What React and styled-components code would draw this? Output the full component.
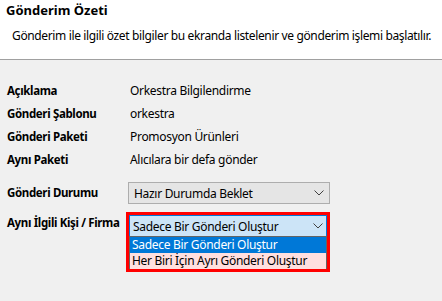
import React from "react";
import styled, { createGlobalStyle } from "styled-components";

const Global = createGlobalStyle`
  html, body { margin: 0; padding: 0; background: #f0f0f0; }
  body { font-family: "Noto Sans", "Open Sans", sans-serif; font-size: 12px; color: #000; }
  * { box-sizing: border-box; }
`;

const Page = styled.div`
  width: 442px;
  height: 301px;
  background: #f0f0f0;
  overflow: hidden;
`;

const Header = styled.header`
  background: #fff;
  height: 60px;
  border-bottom: 1px solid #a0a0a0;
  padding: 1px 0 0 6px;
`;

const Title = styled.h1`
  margin: 0;
  font-size: 13px;
  font-weight: 700;
  line-height: 18px;
  letter-spacing: 0;
`;

const Subtitle = styled.p`
  margin: 9px 0 0 6px;
  font-size: 12px;
  line-height: 16px;
  letter-spacing: -0.36px;
`;

const Form = styled.div`
  display: flex;
  flex-direction: column;
  padding: 19px 0 0 7px;
`;

const Row = styled.div`
  display: flex;
  align-items: ${(p) => (p.$top ? "flex-start" : "center")};
  min-height: ${(p) => p.$h || 23}px;
  margin-top: ${(p) => p.$mt || 0}px;
`;

const Label = styled.div`
  width: 119px;
  flex: none;
  font-weight: 700;
  font-size: 11.5px;
  line-height: 16px;
  letter-spacing: -0.35px;
  white-space: nowrap;
  padding-top: ${(p) => p.$pt || 0}px;
`;

const Value = styled.div`
  padding-left: 4px;
  font-size: 12px;
  line-height: 16px;
  letter-spacing: -0.3px;
`;

const Combo = styled.div`
  margin-left: 2px;
  width: 202px;
  height: 22px;
  display: flex;
  align-items: center;
  justify-content: space-between;
  padding: 0 5px 0 5px;
  background: #e5e5e5;
  border: 1px solid #adadad;
  font-size: 12px;
  letter-spacing: -0.3px;
`;

const Highlight = styled.div`
  width: 204px;
  border: 3px solid #ff0000;
  display: flex;
  flex-direction: column;
`;

const OpenCombo = styled.div`
  height: 21px;
  display: flex;
  align-items: center;
  justify-content: space-between;
  padding: 0 3px 0 3px;
  background: #cce4f7;
  border: 1px solid #0078d7;
  border-bottom: none;
  font-size: 12px;
  letter-spacing: -0.3px;
`;

const List = styled.ul`
  margin: 0;
  padding: 0;
  list-style: none;
  border: 1px solid #646464;
  border-bottom: none;
`;

const Option = styled.li`
  height: 16px;
  line-height: 16px;
  padding-left: 2px;
  font-size: 12px;
  letter-spacing: -0.3px;
  background: ${(p) => (p.$selected ? "#0078d7" : "#ffdfdf")};
  color: ${(p) => (p.$selected ? "#fff" : "#000")};
`;

const Chevron = () => (
  <svg width="10" height="6" viewBox="0 0 10 6" style={{ flex: "none" }}>
    <path d="M0.5 0.5 L5 5 L9.5 0.5" fill="none" stroke="#404040" strokeWidth="1" />
  </svg>
);

const rows = [
  ["Açıklama", "Orkestra Bilgilendirme"],
  ["Gönderi Şablonu", "orkestra"],
  ["Gönderi Paketi", "Promosyon Ürünleri"],
  ["Aynı Paketi", "Alıcılara bir defa gönder"],
];

export default function App() {
  return (
    <Page>
      <Global />
      <Header>
        <Title>Gönderim Özeti</Title>
        <Subtitle>
          Gönderim ile ilgili özet bilgiler bu ekranda listelenir ve gönderim işlemi başlatılır.
        </Subtitle>
      </Header>
      <Form>
        {rows.map(([l, v]) => (
          <Row key={l}>
            <Label>{l}</Label>
            <Value>{v}</Value>
          </Row>
        ))}
        <Row $mt={11} $h={22}>
          <Label>Gönderi Durumu</Label>
          <Combo>
            <span>Hazır Durumda Beklet</span>
            <Chevron />
          </Combo>
        </Row>
        <Row $mt={8} $top>
          <Label $pt={3}>Aynı İlgili Kişi / Firma</Label>
          <Highlight>
            <OpenCombo>
              <span>Sadece Bir Gönderi Oluştur</span>
              <Chevron />
            </OpenCombo>
            <List>
              <Option $selected>Sadece Bir Gönderi Oluştur</Option>
              <Option>Her Biri İçin Ayrı Gönderi Oluştur</Option>
            </List>
          </Highlight>
        </Row>
      </Form>
    </Page>
  );
}
